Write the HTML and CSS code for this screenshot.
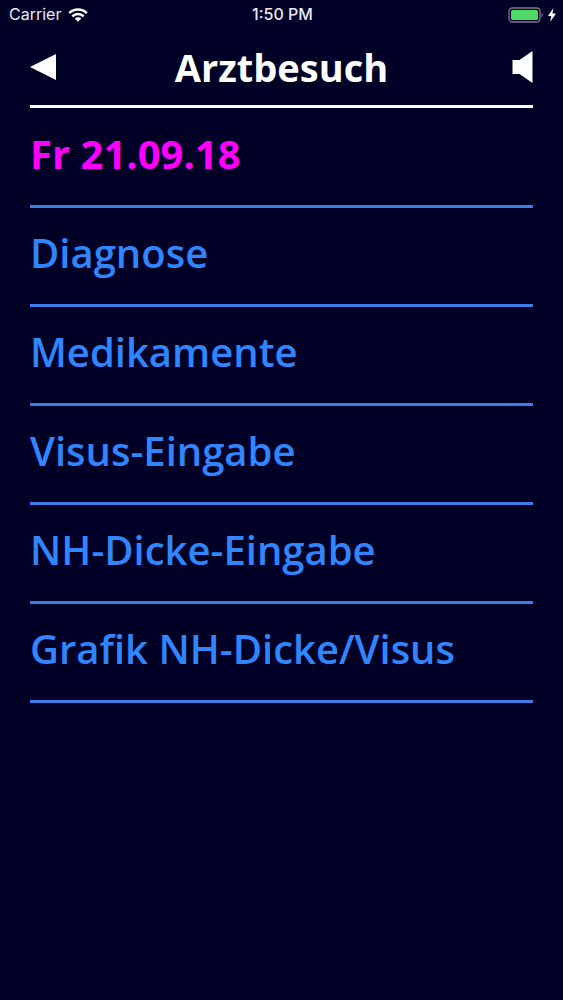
FILE: index.html
```html
<!DOCTYPE html>
<html lang="de">
<head>
<meta charset="utf-8">
<meta name="viewport" content="width=device-width, initial-scale=1">
<title>Arztbesuch</title>
<link rel="stylesheet" href="styles.css">
</head>
<body>
<div class="status">
  <div class="status-left">
    <span>Carrier</span>
    <svg class="wifi" viewBox="0 0 20 14" aria-hidden="true">
      <path d="M1.2 5.2a12.4 12.4 0 0 1 17.6 0M4.3 8.3a8 8 0 0 1 11.4 0" fill="none" stroke="currentColor" stroke-width="2.5"/>
      <path d="M10 13.8 6.7 10.6a4.7 4.7 0 0 1 6.6 0z" fill="currentColor"/>
    </svg>
  </div>
  <span class="time">1:50 PM</span>
  <div class="status-right">
    <svg class="battery" viewBox="0 0 36 16" aria-hidden="true">
      <rect x="1" y="1" width="31" height="14" rx="3.5" fill="none" stroke="#777b8c" stroke-width="1.3"/>
      <rect x="3" y="3" width="27" height="10" rx="1.5" fill="#4cd964"/>
      <path d="M33.5 5.8a2.5 2.5 0 0 1 0 4.4z" fill="#777b8c"/>
    </svg>
    <svg class="bolt" viewBox="0 0 8 14" aria-hidden="true"><path d="M5.4 0 0 8h3.3L2.2 14 8 5.4H4.5z" fill="currentColor"/></svg>
  </div>
</div>
<header class="header">
  <button class="icon-button" type="button" aria-label="Zurück">
    <svg class="back" viewBox="0 0 26 26" aria-hidden="true"><path d="M0 13 26 0v26z" fill="currentColor"/></svg>
  </button>
  <h1 class="title">Arztbesuch</h1>
  <button class="icon-button icon-button-end" type="button" aria-label="Vorlesen">
    <svg class="speaker" viewBox="0 0 20 32" aria-hidden="true"><path d="M0 9h7L20 0v32L7 23H0z" fill="currentColor"/></svg>
  </button>
</header>
<main>
  <ul class="menu">
    <li><a class="item item-date" href="#datum">Fr 21.09.18</a></li>
    <li><a class="item" href="#diagnose">Diagnose</a></li>
    <li><a class="item" href="#medikamente">Medikamente</a></li>
    <li><a class="item" href="#visus">Visus-Eingabe</a></li>
    <li><a class="item" href="#nh-dicke">NH-Dicke-Eingabe</a></li>
    <li><a class="item" href="#grafik">Grafik NH-Dicke/Visus</a></li>
  </ul>
</main>
</body>
</html>
```
FILE: styles.css
```css
* {
  box-sizing: border-box;
}

body {
  margin: 0;
  min-height: 100vh;
  background: #000026;
  color: #fff;
  font-family: "Open Sans", "Noto Sans", sans-serif;
}

.status {
  display: grid;
  grid-template-columns: 1fr auto 1fr;
  align-items: center;
  height: 29px;
  padding: 0 7px 0 9px;
  color: #e9e9f8;
  font: 400 16px/29px Inter, Roboto, sans-serif;
}

.status-left,
.status-right {
  display: flex;
  align-items: center;
  gap: 7px;
}

.status-right {
  justify-content: flex-end;
  gap: 4px;
}

.time {
  font-weight: 500;
}

.wifi {
  width: 20px;
  height: 14px;
  color: #fff;
}

.battery {
  width: 36px;
  height: 16px;
}

.bolt {
  width: 8px;
  height: 14px;
  color: #fff;
}

.header {
  display: grid;
  grid-template-columns: 1fr auto 1fr;
  align-items: center;
  height: 79px;
  margin: 0 30px;
  border-bottom: 3px solid #fff;
}

.title {
  margin: 0;
  font-size: 38px;
  font-weight: 700;
  line-height: 76px;
}

.icon-button {
  display: flex;
  justify-self: start;
  padding: 0;
  border: 0;
  background: none;
  color: inherit;
}

.icon-button-end {
  justify-self: end;
}

.back {
  width: 26px;
  height: 26px;
}

.speaker {
  width: 21px;
  height: 32px;
}

.menu {
  margin: 0 30px;
  padding: 1px 0 0;
  list-style: none;
}

.item {
  display: block;
  padding-bottom: 6px;
  border-bottom: 3px solid #3c7ee8;
  color: #2f86ff;
  font-size: 40px;
  font-weight: 600;
  line-height: 90px;
  text-decoration: none;
}

.item-date {
  color: #ff00ff;
  font-weight: 700;
}
```
